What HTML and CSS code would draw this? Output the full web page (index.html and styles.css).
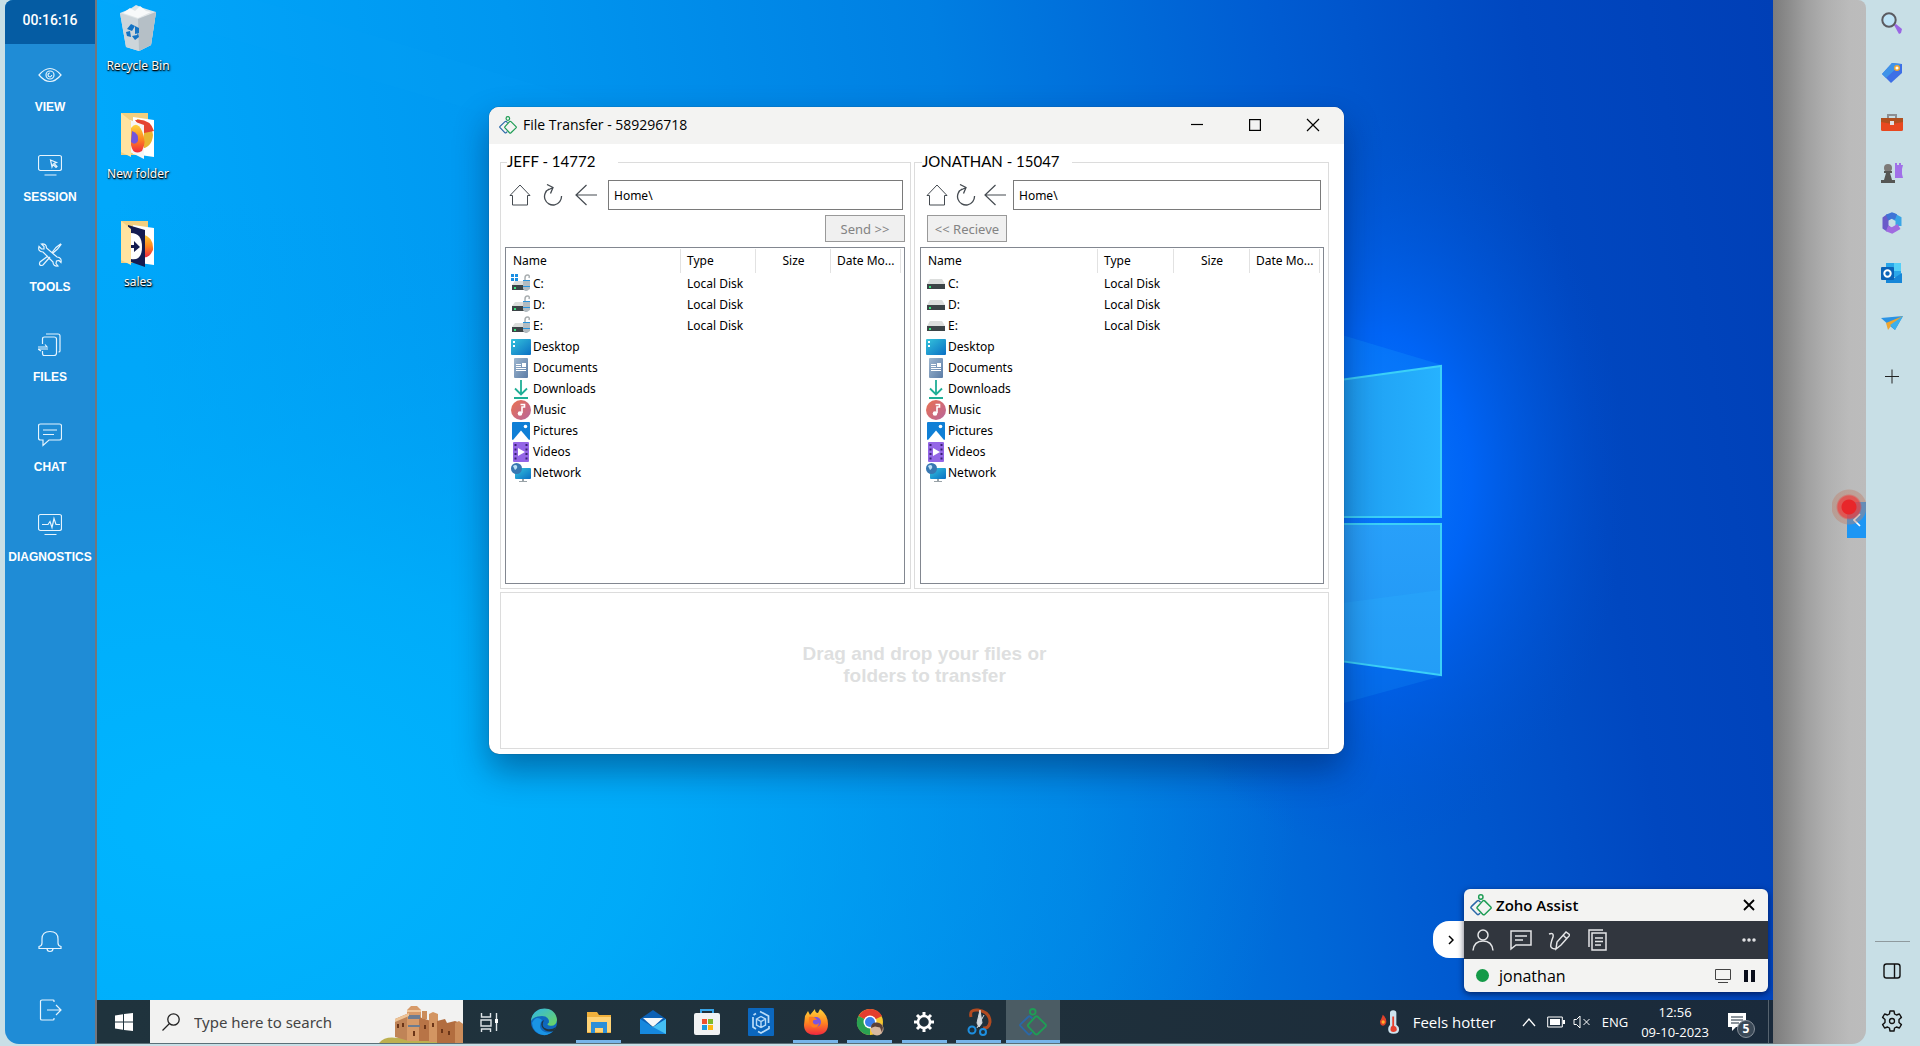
FILE: index.html
```html
<!DOCTYPE html>
<html lang="en">
<head>
<meta charset="utf-8">
<title>Zoho Assist - Remote session</title>
<link rel="stylesheet" href="styles.css">
</head>
<body>
<svg class="defs" aria-hidden="true">
  <defs>
    <linearGradient id="g-cyan" x1="0" y1="0" x2="1" y2="1"><stop offset="0" stop-color="#35c4dc"/><stop offset="1" stop-color="#0a6fc4"/></linearGradient>
    <linearGradient id="g-music" x1="0" y1="0" x2="1" y2="1"><stop offset="0" stop-color="#ea7150"/><stop offset="1" stop-color="#b8659c"/></linearGradient>
    <linearGradient id="g-doc" x1="0" y1="0" x2="1" y2="1"><stop offset="0" stop-color="#9fb7d0"/><stop offset="1" stop-color="#5b7ca6"/></linearGradient>
    <linearGradient id="g-fire" x1="0" y1="0" x2="0" y2="1"><stop offset="0" stop-color="#ffd43c"/><stop offset=".5" stop-color="#ff8a1f"/><stop offset="1" stop-color="#f0273f"/></linearGradient>
    <linearGradient id="g-green" x1="0" y1="0" x2="1" y2="1"><stop offset="0" stop-color="#2fb6e8"/><stop offset="1" stop-color="#6fd55c"/></linearGradient>
  </defs>
  <symbol id="home" viewBox="0 0 22 22"><path d="M1 11.500 11 1l10 10.500M1 11.500h2.500V21h15v-9.500H21" fill="none" stroke="currentColor"/></symbol>
  <symbol id="reload" viewBox="0 0 22 22"><path d="M7 5a8.500 8.500 0 1 0 12.500 7M5 .5l6 3-2.500 6M11 3.500 4 7" fill="none" stroke="currentColor" stroke-width="1.300"/></symbol>
  <symbol id="back" viewBox="0 0 22 22"><path d="M11.500 1 1 11l10.500 10M1 11h21" fill="none" stroke="currentColor" stroke-width="1.200"/></symbol>
  <symbol id="assist" viewBox="0 0 24 24"><g fill="none" stroke-width="1.600" stroke-linejoin="round" stroke-linecap="round"><path d="M11 8.500 9.600 7.300q-.8-.5-1.600.2L1.400 13.800q-.9.900 0 1.800l6.400 6.600q.9.900 1.800 0l1-1" stroke="#2a68a8"/><path d="M14 7.500q1-.9 2 0l6.700 6.600q.8.900 0 1.800L16 22.300q-1 .9-2 0l-6-6.400q-.8-.9 0-1.800z" stroke="#1f9d55"/><circle cx="11.800" cy="3.300" r="2.400" stroke="#1f9d55"/></g></symbol>
  <symbol id="drive" viewBox="0 0 20 20"><path d="M4 5h12l3 5H1z" fill="#dcdedd"/><path d="M1 10h18v5H1z" fill="#3c4447"/><path d="M3 12h2v2H3z" fill="#37e27b"/></symbol>
  <symbol id="drive-lock" viewBox="0 0 20 20"><path d="M4 7h12l2 4H1z" fill="#dcdedd"/><path d="M1 11h14v5H1z" fill="#3c4447"/><path d="M3 13h2v2H3z" fill="#37e27b"/><path d="M14 7V4q0-3 2.500-3T18 4" fill="none" stroke="#a9aeb0" stroke-width="1.500"/><path d="M12 6h7v9l-3 2h-2l-2-2z" fill="#b3bcc1"/><path d="M12 6h7v1h-7zM12 12h7v1h-7z" fill="#2a94dd"/></symbol>
  <symbol id="drive-win" viewBox="0 0 20 20"><use href="#drive-lock"/><path d="M0 0h3v3H0zM4 0h3v3H4zM0 4h3v3H0zM4 4h3v3H4z" fill="#1a8fe3"/></symbol>
  <symbol id="desk" viewBox="0 0 20 20"><rect y="2" width="20" height="16" rx="1" fill="url(#g-cyan)"/><path d="M2 4h2v2H2zM2 8h2v2H2z" fill="#fff"/></symbol>
  <symbol id="docs" viewBox="0 0 20 20"><rect x="3" width="14" height="20" rx="1" fill="url(#g-doc)"/><path d="M5 6h5v1H5zM5 8h5v1H5zM5 10h10v1H5zM5 12h10v1H5zM11 5h4v4h-4z" fill="#fff"/></symbol>
  <symbol id="down" viewBox="0 0 20 20"><path d="M10 1v14M4 9.500l6 6 6-6M3 19h14" fill="none" stroke="#1fae96" stroke-width="1.800"/></symbol>
  <symbol id="music" viewBox="0 0 20 20"><circle cx="10" cy="10" r="10" fill="url(#g-music)"/><path d="M9.500 4.500h4V7H11v6" fill="none" stroke="#fff" stroke-width="1.600"/><circle cx="9" cy="13.500" r="2.300" fill="#fff"/></symbol>
  <symbol id="pics" viewBox="0 0 20 20"><rect x="1" y="1" width="18" height="18" rx="1" fill="#0f7fd6"/><path d="M2 19 10 9.500 18 19z" fill="#fff"/><circle cx="14.500" cy="5.500" r="1.800" fill="#fff"/></symbol>
  <symbol id="vids" viewBox="0 0 20 20"><rect x="2" width="16" height="20" rx="1" fill="#9466e6"/><path d="M7 6l7 4-7 4z" fill="#fff"/><path d="M4.500 2v17M15.500 2v17" stroke="#3b2175" stroke-width="2" stroke-dasharray="2 2.500"/></symbol>
  <symbol id="net" viewBox="0 0 20 20"><rect x="4" y="5" width="16" height="11" rx="1" fill="url(#g-cyan)"/><path d="M11 16h2v2h3v1H8v-1h3z" fill="#9aa3a8"/><circle cx="5.500" cy="5.500" r="5.500" fill="#3878b2"/><path d="M2 3q3-2 4 0T4 7z" fill="#bde2f6"/></symbol>
</svg>

<div class="page">
  <div class="frame">
    <aside class="sidebar">
      <div class="timer">00:16:16</div>
      <nav class="nav">
        <button class="nav-item"><svg viewBox="0 0 24 24"><path d="M1 12q11-13 22 0-11 13-22 0z"/><circle cx="12" cy="12" r="4"/><path d="M12 10q-2 0-2 2 0 1.800 2 2 1.500-.5 1.800-2"/></svg>VIEW</button>
        <button class="nav-item"><svg viewBox="0 0 24 24"><rect x=".5" y="2.500" width="23" height="15" rx="2"/><path d="M6.500 22h12M12.500 7l6 2.500-2.500 1 3 3-1 1-3-3-1 2.500z"/></svg>SESSION</button>
        <button class="nav-item"><svg viewBox="0 0 24 24"><path d="M3.500 1 6 3.500V6H3.500L1 3.500q-1.500 5 4 5.500l10 10q0 4.500 5 4l-2-2.500.5-2.500 2.500-.5 2 2q1-5-4-5.500L8.500 5Q8.500.5 3.500 1zM10 13l-8 6q-1 2 0 3t3 0l7-8M14 9.500l4-5L22.500 1 23 1.500 19.500 6l-4.500 4"/></svg>TOOLS</button>
        <button class="nav-item"><svg viewBox="0 0 24 24"><path d="M8 1h12q2 0 2 2v15q0 1-1.500 1M4.500 11V6q0-2 2-2H16q2.500 0 2.500 2v14q0 2.500-2.500 2.500H6q-1.500 0-1.500-2.500v-2M0 16h10M0 14h9L7 11.500M0 16l3 2"/></svg>FILES</button>
        <button class="nav-item"><svg viewBox="0 0 24 24"><path d="M2.500 1h19q2 0 2 2v12q0 2-2 2H11l-6 5.500v-5.500H2.500q-2 0-2-2V3q0-2 2-2zM5 7h14M5 11.500h11"/></svg>CHAT</button>
        <button class="nav-item"><svg viewBox="0 0 24 24"><rect x=".5" y="1.500" width="23" height="16" rx="2"/><path d="M6.500 21.500h12M4 11.500h6l2-3 2 6 2-9 2 6h4"/></svg>DIAGNOSTICS</button>
      </nav>
      <div class="nav-foot">
        <button class="nav-icon" aria-label="Notifications"><svg viewBox="0 0 24 24"><path d="M1 16.500Q4 16 4 13V9q0-7.500 8-7.500T20 9v4q0 3 3 3.500v2H1zM9 18.500q0 3 3 3t3-3"/></svg></button>
        <button class="nav-icon" aria-label="Exit session"><svg viewBox="0 0 24 24"><path d="M16 4V3q0-1-1-1H4Q2.500 2 2.500 3v18q0 1 1.500 1h11q1 0 1-1v-1M9 12h14M18 7l5 5-5 5"/></svg></button>
      </div>
    </aside>

    <main class="remote">
      <section class="desktop">
        <svg class="wallpaper" viewBox="0 0 1676 1000" preserveAspectRatio="xMaxYMid slice" aria-hidden="true">
          <defs>
            <linearGradient id="sky" x1="0" x2="1" y1=".1" y2="0"><stop offset="0" stop-color="#00a8fb"/><stop offset=".25" stop-color="#0097f0"/><stop offset=".5" stop-color="#007fe2"/><stop offset=".7" stop-color="#005cd2"/><stop offset=".85" stop-color="#0047c0"/><stop offset="1" stop-color="#003fb6"/></linearGradient>
            <radialGradient id="pool" gradientUnits="userSpaceOnUse" cx="0" cy="0" r="1" gradientTransform="translate(120 820) scale(1080 620)"><stop offset="0" stop-color="#00b6ff"/><stop offset=".4" stop-color="#00b0fb" stop-opacity=".75"/><stop offset="1" stop-color="#009cf0" stop-opacity="0"/></radialGradient>
            <radialGradient id="halo" gradientUnits="userSpaceOnUse" cx="0" cy="0" r="1" gradientTransform="translate(1270 480) scale(260 370)"><stop offset="0" stop-color="#0a7cff"/><stop offset=".4" stop-color="#0066fa" stop-opacity=".9"/><stop offset="1" stop-color="#0050d0" stop-opacity="0"/></radialGradient>
            <linearGradient id="pane" x1="0" x2="1"><stop offset="0" stop-color="#1b93ea"/><stop offset="1" stop-color="#26b2ff"/></linearGradient>
            <linearGradient id="pane2" x1="0" x2="0" y1="0" y2="1"><stop offset="0" stop-color="#28a0fa"/><stop offset="1" stop-color="#2196f4"/></linearGradient>
          </defs>
          <rect width="1676" height="1000" fill="url(#sky)"/>
          <rect width="1676" height="1000" fill="url(#pool)"/>
          <rect width="1676" height="1000" fill="url(#halo)"/>
          <path d="M0 0h160l1085 330v35z" fill="#12a9ff" opacity=".07"/>
          <path d="M1245 335l100 30-98 14z" fill="#18a0ff" opacity=".25"/>
          <path d="M1240 661l105 15-98 27z" fill="#18a0ff" opacity=".2"/>
          <path d="M1200 386 1344 366v151H1200z" fill="url(#pane)" stroke="#3bd0f8" stroke-width="2"/>
          <path d="M1200 524h144v151l-144-20z" fill="url(#pane2)" stroke="#3bd0f8" stroke-width="2"/>
          <path d="M1200 609l143-19v84l-143-20z" fill="#2ab4ff" opacity=".25"/>
        </svg>

        <div class="shortcuts">
          <a class="shortcut" href="#bin">
            <svg viewBox="0 0 40 46"><path d="M2 8l10-4 6-4 7 3 13 4-5 33-12 6-13-4z" fill="#dfe5e8"/><path d="M2 8l18 6 18-7-5 33-12 6-13-4z" fill="#cdd5da"/><path d="M20 14l18-7-5 33-12 6z" fill="#b5bfc6"/><path d="M5 8l7-5 5 3 5-5 6 5 5 1-13 6z" fill="#f7f9fa"/><path d="M9 24l4-5 4 2-3 5zM17 21l4 2 0 5-4 1zM8 27l4-1 1 6-4-1zM14 31l5-1 1-2 1 4-4 3z" fill="#1473c4"/></svg>
            <span>Recycle Bin</span>
          </a>
          <a class="shortcut" href="#new-folder">
            <svg viewBox="0 0 40 46"><path d="M3 0h27v42H3z" fill="#f2cf7f"/><path d="M15 4l21 3v37l-21-3z" fill="#fff"/><path d="M19 6q14 2 16 16-1 13-13 14z" fill="#e9b531"/><path d="M17 7q15-2 19 11l-10 2z" fill="#e54431"/><path d="M12 7l14 5v34l-14-7z" fill="#f6f6f6"/><path d="M13 15q6-8 11 3t0 20q-9 5-11-6z" fill="url(#g-fire)"/><path d="M14 18q7 2 6 10-3 5-7 1z" fill="#7455dd"/><path d="M3 0l10 8v36L3 39z" fill="#ffe3a0"/></svg>
            <span>New folder</span>
          </a>
          <a class="shortcut" href="#sales">
            <svg viewBox="0 0 40 46"><path d="M3 0h27v42H3z" fill="#f2cf7f"/><path d="M15 4l21 3v37l-21-3z" fill="#fff"/><path d="M24 13q12 3 11 16-4 9-11 7z" fill="url(#g-fire)"/><path d="M10 4l17 5v37l-17-6z" fill="#151c50"/><path d="M13 12q11 0 11 14T13 38z" fill="#fff"/><path d="M12 24h4v-4l6 6-6 5v-4h-4z" fill="#151c50"/><path d="M3 0l10 8v36L3 39z" fill="#ffe3a0"/></svg>
            <span>sales</span>
          </a>
        </div>

        <section class="window">
          <header class="titlebar">
            <svg class="app-logo"><use href="#assist"/></svg>
            <h1>File Transfer - 589296718</h1>
            <div class="win-controls">
              <button aria-label="Minimize"><svg viewBox="0 0 12 12"><path d="M0 5.500h12"/></svg></button>
              <button aria-label="Maximize"><svg viewBox="0 0 12 12"><rect x=".6" y=".6" width="10.800" height="10.800"/></svg></button>
              <button aria-label="Close"><svg viewBox="0 0 12 12"><path d="M0 0l12 12M12 0 0 12"/></svg></button>
            </div>
          </header>
          <div class="window-body">
            <fieldset class="pane pane-local">
              <legend>JEFF - 14772</legend>
              <div class="pane-content">
                <div class="pathbar">
                  <button aria-label="Home"><svg><use href="#home"/></svg></button>
                  <button aria-label="Reload"><svg><use href="#reload"/></svg></button>
                  <button aria-label="Back"><svg><use href="#back"/></svg></button>
                  <input type="text" value="Home\" aria-label="Local path">
                </div>
                <div class="actions"><button class="transfer" disabled>Send &gt;&gt;</button></div>
                <div class="listing">
                  <table>
                    <colgroup><col class="c-name"><col class="c-type"><col class="c-size"><col class="c-date"></colgroup>
                    <thead><tr><th>Name</th><th>Type</th><th class="size">Size</th><th>Date Mo...</th></tr></thead>
                    <tbody>
                      <tr><td><span class="file"><svg><use href="#drive-win"/></svg>C:</span></td><td>Local Disk</td><td></td><td></td></tr>
                      <tr><td><span class="file"><svg><use href="#drive-lock"/></svg>D:</span></td><td>Local Disk</td><td></td><td></td></tr>
                      <tr><td><span class="file"><svg><use href="#drive-lock"/></svg>E:</span></td><td>Local Disk</td><td></td><td></td></tr>
                      <tr><td><span class="file"><svg><use href="#desk"/></svg>Desktop</span></td><td></td><td></td><td></td></tr>
                      <tr><td><span class="file"><svg><use href="#docs"/></svg>Documents</span></td><td></td><td></td><td></td></tr>
                      <tr><td><span class="file"><svg><use href="#down"/></svg>Downloads</span></td><td></td><td></td><td></td></tr>
                      <tr><td><span class="file"><svg><use href="#music"/></svg>Music</span></td><td></td><td></td><td></td></tr>
                      <tr><td><span class="file"><svg><use href="#pics"/></svg>Pictures</span></td><td></td><td></td><td></td></tr>
                      <tr><td><span class="file"><svg><use href="#vids"/></svg>Videos</span></td><td></td><td></td><td></td></tr>
                      <tr><td><span class="file"><svg><use href="#net"/></svg>Network</span></td><td></td><td></td><td></td></tr>
                    </tbody>
                  </table>
                </div>
              </div>
            </fieldset>
            <fieldset class="pane pane-remote">
              <legend>JONATHAN - 15047</legend>
              <div class="pane-content">
                <div class="pathbar">
                  <button aria-label="Home"><svg><use href="#home"/></svg></button>
                  <button aria-label="Reload"><svg><use href="#reload"/></svg></button>
                  <button aria-label="Back"><svg><use href="#back"/></svg></button>
                  <input type="text" value="Home\" aria-label="Remote path">
                </div>
                <div class="actions"><button class="transfer" disabled>&lt;&lt; Recieve</button></div>
                <div class="listing">
                  <table>
                    <colgroup><col class="c-name"><col class="c-type"><col class="c-size"><col class="c-date"></colgroup>
                    <thead><tr><th>Name</th><th>Type</th><th class="size">Size</th><th>Date Mo...</th></tr></thead>
                    <tbody>
                      <tr><td><span class="file"><svg><use href="#drive"/></svg>C:</span></td><td>Local Disk</td><td></td><td></td></tr>
                      <tr><td><span class="file"><svg><use href="#drive"/></svg>D:</span></td><td>Local Disk</td><td></td><td></td></tr>
                      <tr><td><span class="file"><svg><use href="#drive"/></svg>E:</span></td><td>Local Disk</td><td></td><td></td></tr>
                      <tr><td><span class="file"><svg><use href="#desk"/></svg>Desktop</span></td><td></td><td></td><td></td></tr>
                      <tr><td><span class="file"><svg><use href="#docs"/></svg>Documents</span></td><td></td><td></td><td></td></tr>
                      <tr><td><span class="file"><svg><use href="#down"/></svg>Downloads</span></td><td></td><td></td><td></td></tr>
                      <tr><td><span class="file"><svg><use href="#music"/></svg>Music</span></td><td></td><td></td><td></td></tr>
                      <tr><td><span class="file"><svg><use href="#pics"/></svg>Pictures</span></td><td></td><td></td><td></td></tr>
                      <tr><td><span class="file"><svg><use href="#vids"/></svg>Videos</span></td><td></td><td></td><td></td></tr>
                      <tr><td><span class="file"><svg><use href="#net"/></svg>Network</span></td><td></td><td></td><td></td></tr>
                    </tbody>
                  </table>
                </div>
              </div>
            </fieldset>
            <div class="dropzone"><p>Drag and drop your files or<br>folders to transfer</p></div>
          </div>
        </section>

        <section class="assist">
          <button class="assist-tab" aria-label="Collapse"><svg viewBox="0 0 6 10"><path d="M1 1l4 4-4 4"/></svg></button>
          <div class="assist-panel">
            <header class="assist-head">
              <svg class="assist-logo"><use href="#assist"/></svg>
              <h2>Zoho Assist</h2>
              <button aria-label="Close"><svg viewBox="0 0 12 12"><path d="M1 1l10 10M11 1 1 11"/></svg></button>
            </header>
            <div class="assist-tools">
              <button aria-label="User"><svg viewBox="0 0 22 22"><circle cx="11" cy="6" r="5"/><path d="M1 21.500Q2 12 11 12t10 9.500"/></svg></button>
              <button aria-label="Chat"><svg viewBox="0 0 22 22"><path d="M1 2h20v14H6l-5 4zM5 7h12M5 11h8"/></svg></button>
              <button aria-label="Annotate"><svg viewBox="0 0 22 22"><path d="M1 5q5-2 4 3-3 8-2 10t5 2M8 20l1-7 9-10 4 3-9 10zM15 6l4 4"/></svg></button>
              <button aria-label="Files"><svg viewBox="0 0 22 22"><path d="M6 4h14v17H6zM3 18V1h14M9 9h8M9 12.500h8M9 16h6"/></svg></button>
              <button class="more" aria-label="More"><svg viewBox="0 0 22 22"><circle cx="6" cy="11" r="1"/><circle cx="11" cy="11" r="1"/><circle cx="16" cy="11" r="1"/></svg></button>
            </div>
            <div class="assist-user">
              <span class="status"></span>
              <span class="name">jonathan</span>
              <button aria-label="Screen"><svg viewBox="0 0 16 16"><path d="M.5 1.500h15v10H.5zM3 14.500h10" fill="none" stroke="#444"/></svg></button>
              <button aria-label="Pause"><svg viewBox="0 0 16 16"><path d="M3 2h4v12H3zM10 2h4v12h-4z" fill="#0a0f1c"/></svg></button>
            </div>
          </div>
        </section>
      </section>

      <footer class="taskbar">
        <button class="start" aria-label="Start"><svg viewBox="0 0 18 18"><path d="M0 2.500 8 1.200V8.500H0zM9 1 18 0v8.500H9zM0 9.500h8v7.300L0 15.500zM9 9.500h9V18l-9-1z" fill="#fff"/></svg></button>
        <label class="search">
          <svg class="lens" viewBox="0 0 18 18"><circle cx="11.500" cy="6.500" r="5.700"/><path d="M7.500 10.500 .5 17.500"/></svg>
          <input type="search" placeholder="Type here to search" aria-label="Search">
          <svg class="castle" viewBox="0 0 84 38"><path d="M0 38q6-7 18-5l30-2 36 7z" fill="#bdb04f"/><path d="M16 14l14-6v28l-14-4z" fill="#c08457"/><path d="M28 5l4-4h6l4 4v31H28z" fill="#d79a68"/><path d="M40 12l12 4v20H40z" fill="#b87446"/><path d="M50 9l4-2 5 2v28h-9z" fill="#d39562"/><path d="M58 16l8-2 2 4 8-2 8 3v19H58z" fill="#b26d3f"/><path d="M76 18l4-2 4 3v19h-8zM43 6h5v8h-5z" fill="#cb8c5a"/><path d="M29 10h12v4H29zM29 20h12v2H29z" fill="#6c7c91"/><path d="M18 19h2v4h-2zM23 18h2v4h-2zM45 20h2v4h-2zM53 18h2v4h-2zM62 24h2v4h-2zM69 26h2v4h-2zM34 26h2v5h-2z" fill="#6b3518"/><path d="M16 14l14-6v3l-14 6zM28 5h14v2H28z" fill="#eec497"/></svg>
        </label>
        <nav class="apps">
          <button aria-label="Task view"><svg viewBox="0 0 28 28"><path d="M5.500 5v4h9V5M5 12h10v6H5zM5.500 24v-3h9v3M20.500 5v18" fill="none" stroke="#dfe5e8" stroke-width="1.400"/><path d="M19 11h3v4h-3z" fill="#fff"/></svg></button>
          <button aria-label="Edge"><svg viewBox="0 0 28 28"><circle cx="14" cy="14" r="13" fill="#0f67bd"/><path d="M1 13C2-3 26-4 27 12q-1 7-8 5.500-3-1 0-3Q19 8 12 8 4 8 1 13z" fill="url(#g-green)"/><path d="M12 12q-5 9 3 12 6 2 10-3-6 7-12 6Q3 25 2 15q4-8 10-3z" fill="#1a94e4"/><path d="M14 12q-4 7 3 9 5 1 9-2l-2 4q-8 2-12-4-2-5 2-7z" fill="#20343f"/></svg></button>
          <button class="open" aria-label="File Explorer"><svg viewBox="0 0 28 28"><path d="M2 4h10l2 3h12v18H2z" fill="#f0b13c"/><path d="M2 9h24v15H2z" fill="#ffd376"/><path d="M6 14h16v11h-4v-5h-8v5H6z" fill="#2b8fd8"/></svg></button>
          <button aria-label="Mail"><svg viewBox="0 0 28 28"><path d="M1 11 14 2l13 9v6H1z" fill="#0c60b4"/><path d="M4 10h20L14 19z" fill="#f5f7f8"/><path d="M1 11l13 8L27 11v15H1z" fill="#1688de"/><path d="M14 19 27 11v15z" fill="#45bff3"/></svg></button>
          <button aria-label="Store"><svg viewBox="0 0 28 28"><path d="M8 6V2h12v4" fill="none" stroke="#38a5e8" stroke-width="2"/><rect x="1" y="5" width="26" height="22" rx="2" fill="#f1f3f4"/><path d="M9 11h5v5H9z" fill="#f0502c"/><path d="M15 11h5v5h-5z" fill="#7eba2b"/><path d="M9 17h5v5H9z" fill="#1b9ae0"/><path d="M15 17h5v5h-5z" fill="#fdb813"/></svg></button>
          <button aria-label="Hyper-V"><svg viewBox="0 0 28 28"><rect x="1" width="26" height="28" rx="1" fill="#0b67be"/><path d="M13 3.500 21.500 8v7M6 9v10l3 2M11 23.500l3 1.500 8-4.500V18M9 5.500 6.500 7" fill="none" stroke="#b9dcf8" stroke-width="1.700"/><path d="M9.500 11 14 8.500l4.500 2.500v6L14 19.500 9.500 17zM9.500 11l4.500 2.500 4.500-2.500M14 13.500v6" fill="none" stroke="#b9dcf8" stroke-width="1.400"/></svg></button>
          <button class="open" aria-label="Firefox"><svg viewBox="0 0 28 28"><path d="M3 8l3-5 2 4 5-6q0 4 3 4l2-4q8 6 8 15 0 11-12 11T2 17z" fill="url(#g-fire)"/><circle cx="14" cy="14" r="5" fill="#7b55df"/><path d="M7 9q5-1 8 3-5-1-4 3 3 3 6 0-1 6-7 4-4-3-3-10z" fill="#ff7b1f"/></svg></button>
          <button class="open" aria-label="Chrome"><svg viewBox="0 0 28 28"><circle cx="14" cy="14" r="13" fill="#f7c62f"/><path d="M14 14 2.500 8Q7 1 14 1q8 0 12 7z" fill="#e33e2e"/><path d="M14 14 2.500 8Q-2 17 5 23.500q4 3.500 9 3.500z" fill="#2aa152"/><circle cx="14" cy="14" r="6.500" fill="#fff"/><circle cx="14" cy="14" r="5" fill="#3a7eea"/><circle cx="21" cy="21" r="6.500" fill="#d7b8a0"/><path d="M15 20q0-6 6-5.500 5 .5 6 5l-1 5-2-5-5-1z" fill="#5a4038"/></svg></button>
          <button class="open" aria-label="Settings"><svg viewBox="0 0 28 28"><circle cx="14" cy="14" r="6" fill="none" stroke="#fff" stroke-width="2.500"/><path d="M14 4v4M14 20v4M4 14h4M20 14h4M7 7l3 3M18 18l3 3M21 7l-3 3M10 18l-3 3" stroke="#fff" stroke-width="3"/></svg></button>
          <button class="open" aria-label="Snipping Tool"><svg viewBox="0 0 28 28"><path d="M6 9Q4 1 13 2q12 2 12 12-1 7-7 6" fill="none" stroke="#b24a20" stroke-width="3"/><path d="M15 2l2 13-3 4-2-4zM19 7l-7 13" fill="#d5dade" stroke="#d5dade"/><circle cx="7" cy="22" r="3.500" fill="none" stroke="#1d8fe0" stroke-width="2"/><circle cx="18" cy="24" r="3" fill="none" stroke="#1d8fe0" stroke-width="2"/></svg></button>
          <button class="open current" aria-label="Zoho Assist"><svg viewBox="0 0 24 24"><use href="#assist"/></svg></button>
        </nav>
        <div class="tray">
          <svg class="thermo" viewBox="0 0 22 26"><path d="M3 5q4 3 4 8-1 4-4 4T0 12q2-3 3-7z" fill="#e0432b"/><circle cx="3.500" cy="13" r="1.800" fill="#ffb429"/><path d="M11 3q0-3 3.500-3T18 3v13q3 2 3 5 0 5-6 5t-6-5q0-3 2-5z" fill="#cfe3ee"/><path d="M13.500 7h2v10q3 1 3 4t-4 3q-3 0-3-3t2-4z" fill="#e8412f"/></svg>
          <span class="weather">Feels hotter</span>
          <svg class="caret" viewBox="0 0 14 10"><path d="M1 9l6-7 6 7"/></svg>
          <svg class="battery" viewBox="0 0 18 12"><path d="M.7 1h14.600v10H.7z" fill="none" stroke="#fff"/><path d="M3 3h10v6H3zM16 4h2v4h-2z" fill="#fff"/></svg>
          <svg class="speaker" viewBox="0 0 18 14"><path d="M1 4.500h2.500L7 1v12L3.500 9.500H1zM10.500 4l6 6M16.500 4l-6 6"/></svg>
          <span class="lang">ENG</span>
          <time class="clock">12:56<br>09-10-2023</time>
          <button class="alerts" aria-label="Notifications"><svg viewBox="0 0 20 20"><path d="M0 1h18v14H8l-4 4v-4H0z" fill="#fff"/><path d="M3 5h12M3 8h12M3 11h8" stroke="#1b2b3b"/></svg><span class="badge">5</span></button>
        </div>
      </footer>
    </main>

    <aside class="gutter">
      <button class="drawer" aria-label="Open panel"><svg viewBox="0 0 8 14"><path d="M7 1 1 7l6 6"/></svg></button>
      <span class="pointer"></span>
    </aside>
  </div>

  <aside class="rail">
    <button aria-label="Search"><svg viewBox="0 0 22 22"><path d="M13 13l2-1 6 5-1 4-2 1z" fill="#9a66e4"/><circle cx="8" cy="8" r="6.700" fill="#bfe4f6" stroke="#5a5a60" stroke-width="2"/></svg></button>
    <button aria-label="Shopping"><svg viewBox="0 0 22 22"><path d="M1 12 11 1l10 1v9L10 21z" fill="#3d6fe6"/><path d="M1 12 11 1l9 1L5 16z" fill="#3f93e8"/><circle cx="16" cy="6" r="2.300" fill="#fff" stroke="#f2a72f" stroke-width="1.500"/></svg></button>
    <button aria-label="Tools"><svg viewBox="0 0 22 22"><path d="M7 6V3h8v3" fill="none" stroke="#8d8f92" stroke-width="2"/><rect y="6" width="22" height="13" rx="1.500" fill="#e8481f"/><path d="M0 6h22v4l-11 2L0 10z" fill="#b0501f"/><rect x="9" y="9" width="4" height="4" fill="#dfe2e3"/></svg></button>
    <button aria-label="Games"><svg viewBox="0 0 22 22"><path d="M14 1h2v2h2V1h2v2h2l-1 4v5l1 4h-8z" fill="#a070e8"/><circle cx="7" cy="6" r="4" fill="#7d7a78"/><path d="M3 9h8v2H9l2 7h3v3H0v-3h3l2-7H3z" fill="#555654"/></svg></button>
    <button aria-label="Microsoft 365"><svg viewBox="0 0 22 22"><g fill="none" stroke-width="6"><path d="M11 3.500 17.500 7v7" stroke="#3aa5e6"/><path d="M8 4.500 4.500 7v8l3 2" stroke="#6a5bc9"/><path d="M6 16.500l5 2 7-4" stroke="#a06be0"/><path d="M6 5.500l5-2 4 1.500" stroke="#3f74d6"/></g></svg></button>
    <button aria-label="Outlook"><svg viewBox="0 0 22 22"><path d="M5 1h15v14H5z" fill="#2aa7ea"/><path d="M13 1h7v8h-7z" fill="#55d0f8"/><path d="M5 12l8 4 8-5v10H5z" fill="#1686d8"/><rect x="0" y="5" width="13" height="13" rx="1" fill="#0a63b8"/><circle cx="6.500" cy="11.500" r="3.200" fill="none" stroke="#fff" stroke-width="2"/></svg></button>
    <button aria-label="Drop"><svg viewBox="0 0 22 22"><path d="M0 6 22 4l-8 14-5-4z" fill="#2b93e4"/><path d="M22 4 5 11l2 7 3-4z" fill="#f0a52e"/><path d="M22 4 9 13l5 5z" fill="#3cb0ee"/></svg></button>
    <button aria-label="Add"><svg viewBox="0 0 22 22"><path d="M4 14.500h14M11 7.500v14" stroke="#222"/></svg></button>
    <hr>
    <button aria-label="Toggle sidebar"><svg viewBox="0 0 22 22"><rect x="3" y="4" width="16" height="14" rx="2.500" fill="none" stroke="#111" stroke-width="1.400"/><path d="M13.500 4v14" stroke="#111" stroke-width="1.400"/></svg></button>
    <button aria-label="Settings"><svg viewBox="0 0 22 22"><path d="M9 1h4l.6 3 1.800 1 3-1 2 3.400L18 9.500v3l2.400 2.100-2 3.400-3-1-1.800 1-.6 3H9l-.6-3-1.800-1-3 1-2-3.400L4 12.500v-3L1.600 7.400l2-3.400 3 1 1.800-1z" fill="none" stroke="#111" stroke-width="1.400" stroke-linejoin="round"/><circle cx="11" cy="11" r="2.500" fill="none" stroke="#111" stroke-width="1.300"/></svg></button>
  </aside>
</div>
</body>
</html>
```
FILE: styles.css
```css
* { box-sizing: border-box; }
body {
  margin: 0;
  background: #c8dfe6;
  font-family: "Noto Sans", "Open Sans", sans-serif;
  font-size: 12px;
  color: #000;
}
button {
  display: flex;
  align-items: center;
  justify-content: center;
  padding: 0;
  border: 0;
  background: none;
  font: inherit;
  color: inherit;
}
svg { display: block; flex: none; }
h1, h2, p { margin: 0; }
.defs { position: absolute; width: 0; height: 0; }

.page {
  display: flex;
  min-height: 100vh;
  padding-left: 5px;
}
.frame {
  display: flex;
  flex: 1;
  min-width: 0;
  margin-bottom: 2px;
  border-radius: 8px 8px 14px 14px;
  overflow: hidden;
}

/* session sidebar */
.sidebar {
  display: flex;
  flex-direction: column;
  flex: none;
  width: 92px;
  border-right: 2px solid #74757c;
  background: #1f8cd6;
  color: #fff;
}
.timer {
  padding: 10px 0 14px;
  background: #055ca3;
  font: 500 14px/20px Roboto, sans-serif;
  text-align: center;
}
.nav { flex: 1; padding-top: 19px; }
.nav-item {
  flex-direction: column;
  justify-content: flex-start;
  gap: 12px;
  width: 100%;
  height: 90px;
  font: bold 12px/16px "Liberation Sans", Arial, sans-serif;
}
.sidebar svg {
  width: 24px;
  height: 24px;
  fill: none;
  stroke: #e6f4fd;
  stroke-width: 1.2;
}
.nav-foot {
  display: flex;
  flex-direction: column;
  align-items: center;
  gap: 44px;
  padding-bottom: 22px;
}

/* remote screen */
.remote {
  display: flex;
  flex-direction: column;
  flex: 1;
  min-width: 0;
}
.desktop { position: relative; flex: 1; overflow: hidden; }
.wallpaper { position: absolute; inset: 0; width: 100%; height: 100%; }
.shortcuts {
  position: absolute;
  top: 4px;
  left: 0;
  display: flex;
  flex-direction: column;
  gap: 36px;
  width: 82px;
}
.shortcut {
  display: flex;
  flex-direction: column;
  align-items: center;
  gap: 4px;
  color: #fff;
  font-size: 12px;
  line-height: 20px;
  text-decoration: none;
  text-shadow: 1px 1px 2px #000, 0 1px 1px #000;
}
.shortcut svg { width: 40px; height: 48px; }

/* file transfer window */
.window {
  position: absolute;
  top: 107px;
  left: 392px;
  width: 855px;
  border-radius: 10px;
  background: #fff;
  box-shadow: 0 0 1px #234, 0 16px 34px rgba(0, 20, 60, .42);
}
.titlebar {
  display: flex;
  align-items: center;
  height: 37px;
  padding: 0 2px 2px 10px;
  border-radius: 10px 10px 0 0;
  background: #f3f3f2;
}
.app-logo { width: 18px; height: 18px; }
.titlebar h1 {
  flex: 1;
  margin-left: 6px;
  font: 14px/20px "Open Sans", sans-serif;
}
.win-controls { display: flex; height: 100%; }
.win-controls button { width: 58px; }
.win-controls svg { width: 12px; height: 12px; overflow: visible; fill: none; stroke: #000; stroke-width: 1.200; }
.window-body {
  display: grid;
  grid-template-columns: 411fr 415fr;
  gap: 3px;
  padding: 8px 15px 5px 11px;
}
.pane {
  min-width: 0;
  height: 437px;
  margin: 0;
  padding: 0 5px 4px 4px;
  border: 1px solid #dcdcdc;
}
.pane legend {
  width: 111px;
  margin-left: 2px;
  padding: 0 0 2px;
  font: 15px/18px Lato, sans-serif;
  white-space: nowrap;
}
.pane-content {
  display: flex;
  flex-direction: column;
  gap: 5px;
  height: 100%;
  padding-top: 8px;
}
.pathbar { display: flex; align-items: center; gap: 11px; padding: 0 2px 0 4px; }
.pathbar svg { width: 22px; height: 22px; color: #444a50; }
.pathbar input {
  flex: 1;
  min-width: 0;
  height: 30px;
  padding: 0 5px;
  border: 1px solid #7a7a7a;
  font: 12px "Noto Sans", sans-serif;
}
.actions { display: flex; justify-content: flex-end; }
.transfer {
  width: 80px;
  height: 27px;
  border: 1px solid #999;
  background: #f0f0f0;
  color: #838383;
  font: 13px "Noto Sans", sans-serif;
}
.listing { flex: 1; min-height: 0; border: 1px solid #828790; }
.listing table { width: 100%; table-layout: fixed; border-spacing: 0; }
.c-name { width: 175px; }
.c-type, .c-size { width: 75px; }
th, td {
  height: 21px;
  padding: 0 0 0 6px;
  font-weight: normal;
  line-height: 21px;
  text-align: left;
  white-space: nowrap;
}
th {
  height: 25px;
  padding-top: 1px;
  line-height: 24px;
  background: linear-gradient(#e2e2e2, #e2e2e2) right 0 bottom 0 / 1px 24px no-repeat;
}
th:first-child { padding-left: 7px; }
th:last-child { background-position: right 3px bottom 0; }
th.size { padding: 1px 0 0; text-align: center; }
td:first-child { padding-left: 5px; }
.file { display: flex; align-items: center; gap: 2px; height: 21px; }
.file svg { width: 20px; height: 20px; }

.pane-remote { padding: 0 4px 4px 5px; }
.pane-remote legend { width: 150px; margin-left: 2px; }
.pane-remote .pathbar { gap: 7px; padding: 0 3px 0 6px; }
.pane-remote .actions { justify-content: flex-start; padding-left: 7px; }
.pane-remote .c-name { width: 177px; }
.pane-remote .c-type, .pane-remote .c-size { width: 76px; }

.dropzone {
  display: flex;
  align-items: center;
  justify-content: center;
  grid-column: 1 / -1;
  height: 157px;
  padding: 0 0 12px 20px;
  border: 1px solid #dcdcdc;
  color: #dedfe0;
  font: bold 19px/22px "Liberation Sans", Arial, sans-serif;
  text-align: center;
}

/* floating assist widget */
.assist {
  position: absolute;
  right: 5px;
  bottom: 8px;
  display: flex;
  align-items: flex-start;
}
.assist-tab {
  width: 31px;
  height: 37px;
  margin-top: 32px;
  border-radius: 16px 0 0 16px;
  background: #fff;
}
.assist-tab svg { width: 6px; height: 10px; margin-left: 4px; fill: none; stroke: #000; stroke-width: 1.500; }
.assist-panel {
  width: 304px;
  border-radius: 6px;
  background: #f3f3f2;
  box-shadow: 0 2px 6px rgba(0, 0, 30, .6);
  overflow: hidden;
}
.assist-head, .assist-user { display: flex; align-items: center; padding-left: 6px; }
.assist-head { height: 32px; }
.assist-head h2 { flex: 1; margin-left: 4px; font: 600 15px/20px "Open Sans", sans-serif; }
.assist-logo { width: 22px; height: 24px; }
.assist-head button { width: 38px; height: 32px; }
.assist-head button svg { width: 12px; height: 12px; stroke: #000; stroke-width: 1.800; }
.assist-tools {
  display: flex;
  align-items: center;
  gap: 16px;
  height: 38px;
  padding: 0 8px;
  background: #31363e;
}
.assist-tools svg { width: 22px; height: 22px; fill: none; stroke: #e4e5e7; stroke-width: 1.500; }
.assist-tools .more { margin-left: auto; }
.assist-user { height: 33px; padding: 0 11px 0 12px; gap: 10px; }
.status { width: 13px; height: 13px; border-radius: 50%; background: #149a48; }
.name { flex: 1; font: 16px/20px "Open Sans", sans-serif; }
.assist-user svg { width: 16px; height: 16px; }

/* taskbar */
.taskbar {
  display: flex;
  flex: none;
  height: 44px;
  border-bottom: 1px solid #5b7078;
  background: linear-gradient(90deg, #1f333d, #1f303b 55%, #1a2a3b);
  color: #fff;
}
.start { width: 53px; }
.start svg { width: 18px; height: 18px; }
.search {
  display: flex;
  align-items: center;
  width: 313px;
  padding-left: 12px;
  background: #f2f2f1;
}
.lens { width: 18px; height: 18px; fill: none; stroke: #222; stroke-width: 1.300; }
.search input {
  flex: 1;
  min-width: 0;
  padding: 0 0 0 14px;
  border: 0;
  background: none;
  font: 15px/22px "Noto Sans", sans-serif;
}
.search input::placeholder { color: #444; opacity: 1; }
.castle { width: 84px; height: 38px; align-self: flex-end; }
.apps { display: flex; width: 597px; }
.apps button { flex: 1; }
.apps svg { width: 28px; height: 28px; }
.apps .open { background: linear-gradient(#77b5ea, #77b5ea) center bottom / 45px 3px no-repeat; }
.apps .current { background-color: #4b5c64; background-size: 100% 3px; }
.tray {
  display: flex;
  align-items: center;
  margin-left: auto;
  padding-right: 20px;
  margin-right: 4px;
  border-right: 1px solid #56636f;
}
.thermo { width: 20px; height: 26px; }
.weather { width: 109px; padding-left: 13px; font: 15px/20px "Open Sans", sans-serif; white-space: nowrap; }
.caret { width: 14px; height: 10px; margin-left: 13px; fill: none; stroke: #fff; stroke-width: 1.300; }
.battery { width: 18px; height: 12px; margin-left: 11px; }
.speaker { width: 18px; height: 14px; margin-left: 8px; fill: none; stroke: #fff; }
.lang { margin-left: 11px; font: 13px/20px "Open Sans", sans-serif; }
.clock { margin-left: 13px; font: 13px/20px "Open Sans", sans-serif; text-align: center; }
.alerts { position: relative; width: 20px; height: 20px; margin-left: 19px; }
.alerts svg { width: 20px; height: 20px; }
.badge {
  position: absolute;
  left: 9px;
  top: 8px;
  width: 18px;
  height: 18px;
  border: 1px solid #87909a;
  border-radius: 50%;
  background: #3b4957;
  font: bold 12px/16px "Open Sans", sans-serif;
  text-align: center;
}

/* strip between the remote screen and the browser rail */
.gutter {
  position: relative;
  flex: none;
  width: 93px;
  background: linear-gradient(90deg, #7c7c7c, #8d8d8d 18%, #a0a0a0 36%, #b0b0b0 58%, #bbb 82%, #bcbcbc);
}
.drawer {
  position: absolute;
  right: 0;
  top: 502px;
  width: 19px;
  height: 36px;
  background: #1c96f4;
}
.drawer svg { width: 8px; height: 14px; fill: none; stroke: #fff; stroke-width: 1.700; }
.pointer {
  position: absolute;
  right: 0;
  top: 489px;
  width: 34px;
  height: 36px;
  background: radial-gradient(circle at 17px 18px, #e8262a 0 7px, rgba(229, 70, 66, .85) 8px 11px, rgba(190, 130, 110, .45) 13px 17px, transparent 18px);
}

/* browser rail */
.rail {
  display: flex;
  flex-direction: column;
  align-items: center;
  gap: 28px;
  flex: none;
  width: 54px;
  padding: 12px 2px 14px 0;
}
.rail svg { width: 22px; height: 22px; }
.rail hr { width: 35px; margin: auto 0 -10px; border: 0; border-top: 1px solid #8f9a9e; }
```
